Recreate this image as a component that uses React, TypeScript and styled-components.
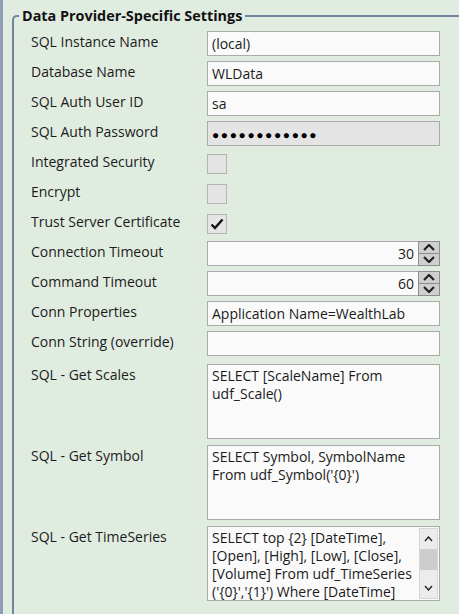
import React from "react";
import styled, { createGlobalStyle } from "styled-components";

const GlobalStyle = createGlobalStyle`
  html, body {
    margin: 0;
    padding: 0;
    background: #e1ece1;
  }
  body {
    font-family: "Open Sans", "Noto Sans", sans-serif;
    color: #1b1b1b;
  }
`;

const Page = styled.div`
  min-height: 614px;
  border-left: 3px solid #8e9cb6;
  box-sizing: border-box;
  overflow: hidden;
  padding-top: 6px;
`;

const Group = styled.fieldset`
  margin: 0 0 0 9px;
  padding: 5px 0 0 17px;
  border: none;
  border-top: 2px solid #7384a3;
  border-left: 2px solid #7384a3;
  border-top-left-radius: 5px;
  min-height: 620px;
`;

const Legend = styled.legend`
  margin-left: -12px;
  padding: 0 3px;
  font-weight: 700;
  font-size: 14.4px;
  line-height: 20px;
  color: #111;
`;

const Form = styled.div`
  display: flex;
  flex-direction: column;
  gap: 5px;
`;

const Row = styled.div<{ $gap?: number }>`
  display: grid;
  grid-template-columns: 176px 233px;
  align-items: start;
  min-height: 25px;
  margin-top: ${(p) => p.$gap ?? 0}px;
`;

const Label = styled.div`
  font-size: 14px;
  line-height: 20px;
  padding-top: 1px;
  white-space: nowrap;
`;

const TextBox = styled.div<{ $disabled?: boolean; $right?: boolean }>`
  box-sizing: border-box;
  height: 25px;
  border: 1px solid #ababab;
  background: ${(p) => (p.$disabled ? "#e4e4e4" : "#fafafa")};
  padding: 0 4px;
  font-size: 14px;
  line-height: 23px;
  white-space: nowrap;
  overflow: hidden;
  text-align: ${(p) => (p.$right ? "right" : "left")};
`;

const Dots = styled.span`
  font-size: 12px;
  letter-spacing: 1.6px;
  color: #000;
`;

const CheckBox = styled.div`
  box-sizing: border-box;
  width: 20px;
  height: 20px;
  margin-top: 3px;
  border: 1px solid #b4b4b4;
  background: #e4e4e4;
  display: flex;
  align-items: center;
  justify-content: center;
`;

const Spin = styled.div`
  display: flex;
  height: 25px;
`;

const SpinValue = styled(TextBox)`
  flex: 1;
  border-right: none;
  padding-right: 4px;
`;

const SpinButtons = styled.div`
  box-sizing: border-box;
  width: 22px;
  display: flex;
  flex-direction: column;
  border: 1px solid #8d8d8d;
  background: #cfcfcf;
`;

const SpinHalf = styled.div<{ $top?: boolean }>`
  flex: 1;
  display: flex;
  align-items: center;
  justify-content: center;
  border-bottom: ${(p) => (p.$top ? "1px solid #8d8d8d" : "none")};
`;

const Memo = styled.div`
  box-sizing: border-box;
  height: 75px;
  border: 1px solid #ababab;
  background: #fafafa;
  display: flex;
  overflow: hidden;
`;

const MemoText = styled.div`
  flex: 1;
  padding: 2px 4px;
  font-size: 14px;
  line-height: 18px;
  white-space: pre;
  overflow: hidden;
`;

const ScrollBar = styled.div`
  width: 19px;
  margin: 1px;
  display: flex;
  flex-direction: column;
  background: #ececec;
  border: 1px solid #d6d6d6;
  box-sizing: border-box;
`;

const ScrollArrow = styled.div`
  height: 20px;
  display: flex;
  align-items: center;
  justify-content: center;
`;

const ScrollTrack = styled.div`
  flex: 1;
  display: flex;
  flex-direction: column;
`;

const Thumb = styled.div`
  height: 21px;
  background: #cdcdcd;
`;

const Chevron = ({ up, w = 12, h = 7, sw = 2.2 }: { up?: boolean; w?: number; h?: number; sw?: number }) => (
  <svg width={w} height={h} viewBox={`0 0 ${w} ${h}`}>
    <polyline
      points={up ? `1,${h - 1} ${w / 2},1 ${w - 1},${h - 1}` : `1,1 ${w / 2},${h - 1} ${w - 1},1`}
      fill="none"
      stroke="#222"
      strokeWidth={sw}
    />
  </svg>
);

const CheckMark = () => (
  <svg width="14" height="12" viewBox="0 0 14 12">
    <path d="M1.5 6.5 L5 10 L12.5 1.5" fill="none" stroke="#111" strokeWidth="2.4" />
  </svg>
);

const fields: { label: string; value: string }[] = [
  { label: "SQL Instance Name", value: "(local)" },
  { label: "Database Name", value: "WLData" },
  { label: "SQL Auth User ID", value: "sa" },
];

const checks: { label: string; checked: boolean }[] = [
  { label: "Integrated Security", checked: false },
  { label: "Encrypt", checked: false },
  { label: "Trust Server Certificate", checked: true },
];

const spins = [
  { label: "Connection Timeout", value: 30 },
  { label: "Command Timeout", value: 60 },
];

export default function App() {
  return (
    <Page>
      <GlobalStyle />
      <Group>
        <Legend>Data Provider-Specific Settings</Legend>
        <Form>
          {fields.map((f) => (
            <Row key={f.label}>
              <Label>{f.label}</Label>
              <TextBox>{f.value}</TextBox>
            </Row>
          ))}
          <Row>
            <Label>SQL Auth Password</Label>
            <TextBox $disabled>
              <Dots>●●●●●●●●●●●●</Dots>
            </TextBox>
          </Row>
          {checks.map((c) => (
            <Row key={c.label}>
              <Label>{c.label}</Label>
              <CheckBox>{c.checked && <CheckMark />}</CheckBox>
            </Row>
          ))}
          {spins.map((s) => (
            <Row key={s.label}>
              <Label>{s.label}</Label>
              <Spin>
                <SpinValue $right>{s.value}</SpinValue>
                <SpinButtons>
                  <SpinHalf $top>
                    <Chevron up />
                  </SpinHalf>
                  <SpinHalf>
                    <Chevron />
                  </SpinHalf>
                </SpinButtons>
              </Spin>
            </Row>
          ))}
          <Row>
            <Label>Conn Properties</Label>
            <TextBox>Application Name=WealthLab</TextBox>
          </Row>
          <Row>
            <Label>Conn String (override)</Label>
            <TextBox />
          </Row>
          <Row $gap={3}>
            <Label>SQL - Get Scales</Label>
            <Memo>
              <MemoText>{"SELECT [ScaleName] From\nudf_Scale()"}</MemoText>
            </Memo>
          </Row>
          <Row $gap={1}>
            <Label>SQL - Get Symbol</Label>
            <Memo>
              <MemoText>{"SELECT Symbol, SymbolName\nFrom udf_Symbol('{0}')"}</MemoText>
            </Memo>
          </Row>
          <Row $gap={1}>
            <Label>SQL - Get TimeSeries</Label>
            <Memo>
              <MemoText>
                {"SELECT top {2} [DateTime],\n[Open], [High], [Low], [Close],\n[Volume] From udf_TimeSeries\n('{0}','{1}') Where [DateTime]"}
              </MemoText>
              <ScrollBar>
                <ScrollArrow>
                  <Chevron up w={9} h={6} sw={1.4} />
                </ScrollArrow>
                <ScrollTrack>
                  <Thumb />
                </ScrollTrack>
                <ScrollArrow>
                  <Chevron w={9} h={6} sw={1.4} />
                </ScrollArrow>
              </ScrollBar>
            </Memo>
          </Row>
        </Form>
      </Group>
    </Page>
  );
}
